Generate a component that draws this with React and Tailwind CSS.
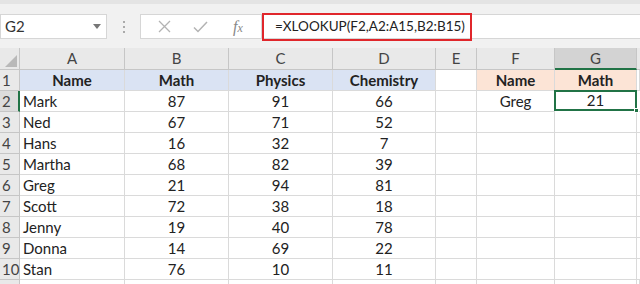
import { ChevronDown } from 'lucide-react';

const cols = ['A', 'B', 'C', 'D', 'E', 'F', 'G'];

const data = [
  ['Mark', 87, 91, 66],
  ['Ned', 67, 71, 52],
  ['Hans', 16, 32, 7],
  ['Martha', 68, 82, 39],
  ['Greg', 21, 94, 81],
  ['Scott', 72, 38, 18],
  ['Jenny', 19, 40, 78],
  ['Donna', 14, 69, 22],
  ['Stan', 76, 10, 11],
];

const grid = 'grid grid-cols-[20px_105px_104px_104px_103px_41px_78px_82px_1fr]';

function Cell({ children, className = '' }) {
  return (
    <div className={`h-[21px] border-r border-b border-[#dadada] flex items-center ${className}`}>
      {children}
    </div>
  );
}

function RowHead({ n, active }) {
  return (
    <div
      className={`h-[21px] border-r border-b border-[#c6c6c6] flex items-center pl-[2px] text-[#444] ${
        active ? 'bg-[#dcdcdc] border-r-2 border-r-[#217346]' : 'bg-[#e9e9e9]'
      }`}
    >
      {n}
    </div>
  );
}

export default function App() {
  return (
    <div
      className="w-[640px] h-[284px] overflow-hidden bg-[#f1f1f1] text-[15px] text-[#222]"
      style={{ fontFamily: 'Lato, "Open Sans", sans-serif' }}
    >
      {/* formula bar */}
      <div className="h-[4px] bg-[#e4e4e4]" />
      <div className="flex items-center h-[27px] mt-[9px]">
        <div className="w-[107px] h-[25px] bg-white border border-[#d6d6d6] flex items-center justify-between pl-[4px] pr-[5px]">
          <span className="text-[#333]">G2</span>
          <svg width="8" height="5" viewBox="0 0 8 5"><path d="M0 0h8L4 5z" fill="#777" /></svg>
        </div>
        <div className="w-[33px] flex flex-col items-center gap-[3px]">
          <span className="w-[2px] h-[2px] bg-[#aaa]" />
          <span className="w-[2px] h-[2px] bg-[#aaa]" />
          <span className="w-[2px] h-[2px] bg-[#aaa]" />
        </div>
        <div className="w-[122px] h-[25px] bg-white border border-[#d6d6d6] flex items-center">
          <svg className="ml-[17px]" width="13" height="13" viewBox="0 0 13 13">
            <path d="M1 1l11 11M12 1L1 12" stroke="#b3b3b3" strokeWidth="1.3" />
          </svg>
          <svg className="ml-[22px]" width="15" height="12" viewBox="0 0 15 12">
            <path d="M1 6.5l4 4L14 1" fill="none" stroke="#b3b3b3" strokeWidth="1.5" />
          </svg>
          <span
            className="ml-[25px] italic text-[#888] text-[16px]"
            style={{ fontFamily: '"Liberation Serif", serif' }}
          >
            f<span className="text-[12px]">x</span>
          </span>
        </div>
        <div className="flex-1 h-[25px] bg-white border-y border-[#d6d6d6] flex items-center">
          <div className="w-[210px] h-[28px] border-2 border-[#e0262b] flex items-center pl-[11px] text-[13.5px] text-[#222]">
            =XLOOKUP(F2,A2:A15,B2:B15)
          </div>
        </div>
      </div>

      {/* sheet */}
      <div className={`${grid} mt-[8px] bg-white`}>
        {/* column headers */}
        <div className="h-[22px] bg-[#e9e9e9] border-r border-b border-[#c6c6c6] relative">
          <svg className="absolute right-[2px] bottom-[2px]" width="12" height="12" viewBox="0 0 12 12">
            <path d="M12 0v12H0z" fill="#b9b9b9" />
          </svg>
        </div>
        {cols.map((c) => (
          <div
            key={c}
            className={`h-[22px] flex items-center justify-center border-r border-[#c6c6c6] text-[#444] ${
              c === 'G' ? 'bg-[#d3d3d3] border-b-2 border-b-[#217346]' : 'bg-[#e9e9e9] border-b'
            }`}
          >
            {c}
          </div>
        ))}
        <div className="h-[22px] bg-[#e9e9e9] border-b border-[#c6c6c6]" />

        {/* row 1 */}
        <RowHead n={1} />
        {['Name', 'Math', 'Physics', 'Chemistry'].map((h) => (
          <Cell key={h} className="justify-center font-bold bg-[#dae3f3]">
            {h}
          </Cell>
        ))}
        <Cell />
        <Cell className="justify-center font-bold bg-[#fce4d6]">Name</Cell>
        <Cell className="justify-center font-bold bg-[#fce4d6]">Math</Cell>
        <Cell />

        {/* row 2 */}
        <RowHead n={2} active />
        <Cell className="pl-[3px]">{data[0][0]}</Cell>
        <Cell className="justify-center">{data[0][1]}</Cell>
        <Cell className="justify-center">{data[0][2]}</Cell>
        <Cell className="justify-center">{data[0][3]}</Cell>
        <Cell />
        <Cell className="justify-center">Greg</Cell>
        <div className="h-[21px] -mt-[1px] -ml-[1px] border-2 border-[#217346] flex items-center justify-center relative">
          21
          <span className="absolute -right-[4px] -bottom-[4px] w-[5px] h-[5px] bg-[#217346] border border-white" />
        </div>
        <Cell className="border-r-0" />

        {data.slice(1).map((r, i) => (
          <div key={r[0]} className="contents">
            <RowHead n={i + 3} />
            <Cell className="pl-[3px]">{r[0]}</Cell>
            <Cell className="justify-center">{r[1]}</Cell>
            <Cell className="justify-center">{r[2]}</Cell>
            <Cell className="justify-center">{r[3]}</Cell>
            <Cell />
            <Cell />
            <Cell />
            <Cell className="border-r-0" />
          </div>
        ))}
        <RowHead n="" />
        {[0, 1, 2, 3, 4, 5, 6, 7].map((k) => (
          <Cell key={k} />
        ))}
      </div>
    </div>
  );
}
